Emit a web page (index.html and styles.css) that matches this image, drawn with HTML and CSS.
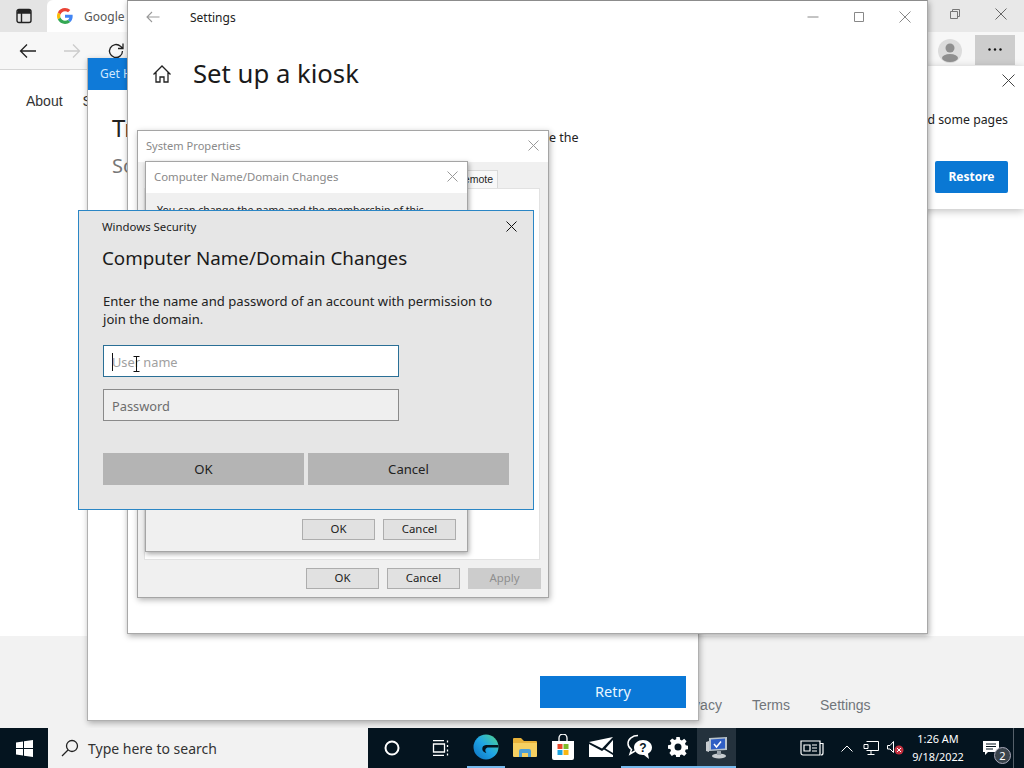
FILE: index.html
```html
<!DOCTYPE html>
<html lang="en">
<head>
<meta charset="utf-8">
<title>Set up a kiosk</title>
<link rel="stylesheet" href="styles.css">
</head>
<body>
<div class="screen">
  <div class="desktop">
    <div class="browser">
      <div class="tabstrip">
        <div class="tab-side"><svg width="16" height="16" viewBox="0 0 16 16" fill="none" stroke="#222" stroke-width="1.4"><rect x="1" y="1.5" width="14" height="13" rx="2"/><path d="M1 5h14M5.5 5v9.5"/><path d="M1.5 2h13v3h-13z" fill="#222" stroke="none"/></svg></div>
        <div class="tab">
          <svg width="16" height="16" viewBox="0 0 48 48"><path fill="#EA4335" d="M24 9.500c3.500 0 6.700 1.300 9.100 3.500l6.800-6.800C35.800 2.400 30.300 0 24 0 14.600 0 6.500 5.400 2.600 13.200l7.900 6.100C12.400 13.700 17.700 9.500 24 9.500z"/><path fill="#4285F4" d="M47 24.500c0-1.600-.1-3.100-.4-4.500H24v9h12.900c-.6 3-2.200 5.500-4.700 7.200l7.600 5.900C44.200 38 47 31.800 47 24.500z"/><path fill="#FBBC05" d="M10.500 28.700C10 27.200 9.800 25.600 9.800 24s.2-3.200.7-4.700l-7.900-6.100C1 16.400 0 20.100 0 24s1 7.600 2.600 10.800l7.900-6.100z"/><path fill="#34A853" d="M24 48c6.500 0 11.900-2.100 15.900-5.800l-7.600-5.900c-2.100 1.400-4.900 2.300-8.300 2.300-6.300 0-11.600-4.200-13.500-9.900l-7.900 6.100C6.500 42.600 14.600 48 24 48z"/></svg>
          <span class="tab-title">Google</span>
        </div>
        <div class="win-controls-back">
          <svg width="12" height="12" viewBox="0 0 12 12" fill="none" stroke="#777"><path d="M1.500 3.500h7v7h-7zM3.500 3.500v-2h7v7h-2"/></svg>
          <svg width="12" height="12" viewBox="0 0 12 12" fill="none" stroke="#666"><path d="M.5.500l11 11M11.500.500l-11 11"/></svg>
        </div>
      </div>
      <div class="toolbar">
        <svg class="tool-back" width="18" height="16" viewBox="0 0 18 16" fill="none" stroke="#222" stroke-width="1.300"><path d="M17 8H1.500M8 1.500L1.500 8 8 14.500"/></svg>
        <svg class="tool-forward" width="18" height="16" viewBox="0 0 18 16" fill="none" stroke="#ccc" stroke-width="1.300"><path d="M1 8h15.500M10 1.500L16.500 8 10 14.500"/></svg>
        <svg class="tool-reload" width="18" height="18" viewBox="0 0 18 18" fill="none" stroke="#222" stroke-width="1.300"><path d="M15.500 9a6.500 6.500 0 1 1-2-4.700L16 6.500M16 1.500v5h-5"/></svg>
        <svg class="avatar" width="24" height="24" viewBox="0 0 24 24"><circle cx="12" cy="12" r="12" fill="#dcdcdc"/><circle cx="12" cy="9" r="4.500" fill="#8f8f8f"/><ellipse cx="12" cy="19" rx="8" ry="4" fill="#8f8f8f"/></svg>
        <div class="more"><svg width="14" height="3" viewBox="0 0 14 3" fill="#111"><circle cx="1.500" cy="1.500" r="1.200"/><circle cx="7" cy="1.500" r="1.200"/><circle cx="12.500" cy="1.500" r="1.200"/></svg></div>
      </div>
      <div class="page">
        <div class="page-nav"><span>About</span><span>Store</span></div>
      </div>
      <div class="page-footer"><span>Privacy</span><span>Terms</span><span>Settings</span></div>
    </div>

    <div class="restore-bar">
      <svg class="restore-close" width="13" height="13" viewBox="0 0 13 13" fill="none" stroke="#444"><path d="M.5.500l12 12M12.500.500l-12 12"/></svg>
      <p class="restore-text">d some pages</p>
      <div class="restore-btn">Restore</div>
    </div>

    <div class="error-dialog">
      <div class="error-head">Get H</div>
      <div class="error-body">
        <div class="error-title">Tr</div>
        <div class="error-sub">So</div>
      </div>
      <div class="error-foot"><div class="retry">Retry</div></div>
    </div>

    <div class="settings">
      <div class="settings-bar">
        <svg class="settings-back" width="14" height="12" viewBox="0 0 14 12" fill="none" stroke="#999" stroke-width="1.100"><path d="M13.500 6H1M6 1L1 6l5 5"/></svg>
        <span class="settings-name">Settings</span>
        <div class="caption-btns">
          <svg width="12" height="12" viewBox="0 0 12 12" stroke="#888" fill="none"><path d="M.5 6h11"/></svg>
          <svg width="12" height="12" viewBox="0 0 12 12" stroke="#888" fill="none"><path d="M1.500 1.500h9v9h-9z"/></svg>
          <svg width="12" height="12" viewBox="0 0 12 12" stroke="#888" fill="none"><path d="M.5.500l11 11M11.500.500l-11 11"/></svg>
        </div>
      </div>
      <div class="settings-head">
        <svg width="20" height="20" viewBox="0 0 20 20" fill="none" stroke="#222" stroke-width="1.300"><path d="M1.500 10.500L10 2l8.500 8.500M4 8.500V18h4v-5h4v5h4V8.500"/></svg>
        <h1 class="settings-title">Set up a kiosk</h1>
      </div>
      <p class="settings-text">e the</p>
    </div>

    <div class="sysprops">
      <div class="cap"><span class="cap-title cap-sys">System Properties</span>
        <svg width="11" height="11" viewBox="0 0 11 11" stroke="#999" fill="none"><path d="M.5.500l10 10M10.500.500l-10 10"/></svg>
      </div>
      <div class="sys-tabs"><span class="sys-tab">emote</span></div>
      <div class="sys-pane"></div>
      <div class="btn-row sys-btns"><span class="btn">OK</span><span class="btn">Cancel</span><span class="btn is-off">Apply</span></div>
    </div>

    <div class="namechange">
      <div class="cap"><span class="cap-title">Computer Name/Domain Changes</span>
        <svg width="11" height="11" viewBox="0 0 11 11" stroke="#999" fill="none"><path d="M.5.500l10 10M10.500.500l-10 10"/></svg>
      </div>
      <p class="name-text">You can change the name and the membership of this</p>
      <div class="btn-row name-btns"><span class="btn">OK</span><span class="btn">Cancel</span></div>
    </div>

    <div class="security">
      <div class="sec-top"><span class="sec-label">Windows Security</span>
        <svg width="11" height="11" viewBox="0 0 11 11" stroke="#111" fill="none"><path d="M.5.500l10 10M10.500.500l-10 10"/></svg>
      </div>
      <h2 class="sec-title">Computer Name/Domain Changes</h2>
      <p class="sec-text">Enter the name and password of an account with permission to join the domain.</p>
      <div class="field field-active"><span class="caret"></span><span class="ph">User name</span>
        <svg class="ibeam" width="7" height="16" viewBox="0 0 7 16" fill="none" stroke="#111"><path d="M.5.500h6M3.500.500v15M.5 15.500h6"/></svg>
      </div>
      <div class="field"><span class="ph ph-dark">Password</span></div>
      <div class="sec-btns"><span class="sec-btn">OK</span><span class="sec-btn">Cancel</span></div>
    </div>
  </div>

  <div class="taskbar">
    <div class="start"><svg width="17" height="17" viewBox="0 0 17 17" fill="#fff"><path d="M0 2.500l7-1v6.500H0zM8 1.300L17 0v8H8zM0 9h7v6.500l-7-1zM8 9h9v8l-9-1.300z"/></svg></div>
    <div class="search">
      <svg width="18" height="18" viewBox="0 0 18 18" fill="none" stroke="#222" stroke-width="1.300"><circle cx="11" cy="7" r="5.500"/><path d="M7 11l-6 6"/></svg>
      <span>Type here to search</span>
    </div>
    <div class="wide-item"><svg width="16" height="16" viewBox="0 0 16 16" fill="none" stroke="#fff" stroke-width="2"><circle cx="8" cy="8" r="6.500"/></svg></div>
    <div class="wide-item"><svg width="17" height="16" viewBox="0 0 17 16" fill="none" stroke="#fff" stroke-width="1.300"><path d="M1 .5h11M1 15.500h11M1.500 4h11v8h-11zM15.500 .5v2M15.500 5v2M15.500 9.500v2M15.500 13.500v2"/></svg></div>
    <div class="app app-on">
      <svg width="26" height="26" viewBox="0 0 26 26"><defs><linearGradient id="eg" x1="0" y1="1" x2="1" y2="0"><stop offset="0" stop-color="#0d6fbe"/><stop offset=".5" stop-color="#1fa5e6"/><stop offset="1" stop-color="#53d68a"/></linearGradient></defs><circle cx="13" cy="13" r="12.500" fill="url(#eg)"/><path d="M13 11c-2.500.2-4 2-3.700 4.200.3 2 2 3.500 4.200 3.800-1-1-1.500-2.500-1-3.800.5-1.200 1.500-1.700 3-1.700h9.900c.2-1.200.1-2-.1-2.500z" fill="#04141f"/></svg>
    </div>
    <div class="app">
      <svg width="24" height="20" viewBox="0 0 24 20"><path d="M0 2a1 1 0 0 1 1-1h7l3 3h12a1 1 0 0 1 1 1v14H0z" fill="#e8b23a"/><path d="M0 6h24v13a1 1 0 0 1-1 1H1a1 1 0 0 1-1-1z" fill="#f6d061"/><path d="M6 20v-6a2 2 0 0 1 2-2h8a2 2 0 0 1 2 2v6h-3v-4H9v4z" fill="#4d9fd6"/></svg>
    </div>
    <div class="app">
      <svg width="24" height="26" viewBox="0 0 24 26"><path d="M8 7V4a4 4 0 0 1 8 0v3" fill="none" stroke="#fff" stroke-width="1.300"/><path d="M1 7h22v17a2 2 0 0 1-2 2H3a2 2 0 0 1-2-2z" fill="#fff"/><rect x="6.500" y="10" width="5" height="5" fill="#e8472a"/><rect x="12.500" y="10" width="5" height="5" fill="#7cba2a"/><rect x="6.500" y="16" width="5" height="5" fill="#1aa3e0"/><rect x="12.500" y="16" width="5" height="5" fill="#f9b612"/></svg>
    </div>
    <div class="app">
      <svg width="24" height="20" viewBox="0 0 24 20" fill="#fff"><path d="M0 5L24 0 13 11.500z"/><path d="M0 7v13h24v-2l-9-5.500-2 1.500z"/><path d="M24 3v13l-7.500-4.500z"/></svg>
    </div>
    <div class="app app-on">
      <svg width="26" height="26" viewBox="0 0 26 26"><path d="M11 1.500c-5.500 0-10 3.500-10 8 0 2.500 1.300 4.500 3.500 6L3 20l5-3" fill="none" stroke="#fff" stroke-width="1.500"/><path d="M16 6c-5 0-9 3.300-9 7.500S11 21 16 21l1 .1 5 3.900-1-5.200c2.300-1.400 4-3.600 4-6.300C25 9.300 21 6 16 6z" fill="#fff"/><text class="help-mark" x="16" y="18">?</text></svg>
    </div>
    <div class="app app-on">
      <svg width="20" height="20" viewBox="0 0 20 20"><path fill="#fff" fill-rule="evenodd" d="M8.300 0h3.400l.5 2.700 1.700.7 2.300-1.600 2.400 2.400-1.600 2.300.7 1.700 2.700.5v3.400l-2.700.5-.7 1.700 1.600 2.300-2.400 2.400-2.300-1.600-1.700.7-.5 2.700H8.300l-.5-2.700-1.700-.7-2.300 1.600L1.400 16l1.600-2.300-.7-1.700L0 11.700V8.300l2.700-.5.7-1.700-1.600-2.300 2.400-2.400 2.300 1.600 1.700-.7zM10 6.500a3.500 3.500 0 1 0 0 7 3.500 3.500 0 0 0 0-7z"/></svg>
    </div>
    <div class="app app-on app-active">
      <svg width="24" height="24" viewBox="0 0 24 24"><path d="M4 3l18-1v13L4 16z" fill="#b9c4cc"/><path d="M6 4.500l14-1v10L6 14.500z" fill="#2f5fc4"/><path d="M9 9l2.500 3L16 6.500" stroke="#fff" stroke-width="1.500" fill="none"/><path d="M1 7l3-1v11l-3-1z" fill="#c7ccd0"/><ellipse cx="14" cy="21" rx="7" ry="2.500" fill="#c7ccd0"/><rect x="12" y="16" width="4" height="4" fill="#9aa3aa"/></svg>
    </div>
    <div class="tray">
      <div class="tray-news"><svg width="24" height="16" viewBox="0 0 24 16" fill="none" stroke="#fff" stroke-width="1.200"><path d="M1 1h19v14H3a2 2 0 0 1-2-2zM20 3.500h3V13a2 2 0 0 1-2 2"/><path d="M4 5h6v6H4zM12 5h5M12 8h5M12 11h5"/></svg></div>
      <div class="tray-icon"><svg width="12" height="7" viewBox="0 0 12 7" fill="none" stroke="#fff"><path d="M.5 6.500L6 1l5.500 5.500"/></svg></div>
      <div class="tray-icon"><svg width="16" height="14" viewBox="0 0 16 14" fill="none" stroke="#fff"><path d="M3.500.5h12v9h-12M1 3.500h4v4H1zM8 9.500v3.500M4.500 13.500h7"/></svg></div>
      <div class="tray-icon"><svg width="17" height="14" viewBox="0 0 17 14"><path d="M.5 4.500h2.500L6.500.5v11L3 8H.5z" fill="none" stroke="#fff"/><circle cx="12" cy="9" r="4.500" fill="#c4303f"/><path d="M10 7l4 4M14 7l-4 4" stroke="#fff"/></svg></div>
      <div class="clock"><span>1:26 AM</span><span>9/18/2022</span></div>
      <div class="notif"><svg width="16" height="15" viewBox="0 0 16 15"><path d="M0 0h16v11H5l-3 3v-3H0z" fill="#fff"/><path d="M3 3h10M3 5.500h10M3 8h7" stroke="#04141f"/></svg><span class="notif-badge">2</span></div>
      <div class="show-desktop"></div>
    </div>
  </div>
</div>
</body>
</html>
```
FILE: styles.css
```css
* { box-sizing: border-box; }
html, body { margin: 0; padding: 0; }
body { font-family: "Noto Sans", "Open Sans", sans-serif; color: #111; overflow: hidden; }
p, h1, h2 { margin: 0; font-weight: 400; }
svg { display: block; flex: none; }

.screen { width: 1024px; height: 768px; display: flex; flex-direction: column; }
.desktop { position: relative; flex: 1; overflow: hidden; background: #fff; }

/* Browser */
.browser { height: 100%; display: flex; flex-direction: column; }
.tabstrip { height: 32px; background: #e8e8e8; display: flex; align-items: stretch; }
.tab-side { width: 47px; padding: 8px 0 0 16px; background: #e4e4e4; }
.tab { width: 260px; background: #fff; border-radius: 6px 6px 0 0; display: flex; align-items: center; gap: 11px; padding-left: 10px; }
.tab-title { font-size: 12px; color: #555; }
.win-controls-back { margin-left: auto; display: flex; gap: 34px; padding: 8px 17px 0 0; }
.toolbar { height: 38px; background: #f7f7f7; border-bottom: 1px solid #d6d6d6; display: flex; align-items: center; padding-left: 19px; }
.tool-back { margin-right: 26px; }
.tool-forward { margin-right: 26px; }
.avatar { margin-left: auto; margin-right: 13px; }
.more { width: 40px; height: 30px; background: #cdcdcd; margin: -2px 9px 0 0; display: flex; align-items: center; justify-content: center; }
.page { flex: 1; background: #fff; }
.page-nav { display: flex; gap: 20px; padding: 23px 0 0 26px; font: 14px/16px "Liberation Sans", sans-serif; color: #333; }
.page-footer { height: 92px; background: #f2f2f2; display: flex; gap: 30px; padding: 61px 0 0 676px; font: 14px/16px "Liberation Sans", sans-serif; color: #70757a; }

.restore-bar { position: absolute; left: 700px; top: 66px; width: 324px; height: 143px; background: #fff; border-radius: 4px 0 0 4px; box-shadow: 0 2px 8px rgba(0,0,0,.25); display: flex; flex-direction: column; align-items: flex-end; padding: 8px 10px 0 0; }
.restore-close { margin-right: -1px; }
.restore-text { font-size: 12.300px; line-height: 18px; margin: 24px 6px 0 0; color: #222; white-space: nowrap; }
.restore-btn { width: 73px; height: 32px; margin: 32px 6px 0 0; background: #0a78d4; border-radius: 2px; color: #fff; font-size: 12px; font-weight: 700; line-height: 31px; text-align: center; }

/* Dialog behind settings */
.error-dialog { position: absolute; left: 87px; top: 58px; width: 612px; height: 663px; background: #fff; border: 1px solid #b0b0b0; border-top: 0; box-shadow: 1px 2px 6px rgba(0,0,0,.3); display: flex; flex-direction: column; }
.error-head { height: 32px; background: #0f7ad8; color: #cfe8ff; font-size: 12px; line-height: 31px; padding-left: 12px; }
.error-body { flex: 1; padding: 22px 0 0 24px; }
.error-title { font-size: 24px; line-height: 32px; color: #222; }
.error-sub { font-size: 20px; line-height: 28px; margin-top: 8px; color: #777; }
.error-foot { display: flex; justify-content: flex-end; padding: 0 12px 12px 0; }
.retry { width: 146px; height: 32px; background: #0a78d7; color: #e8f6ff; font-size: 14.500px; line-height: 31px; text-align: center; }

/* Settings */
.settings { position: absolute; left: 127px; top: 0; width: 801px; height: 634px; background: #fff; border: 1px solid #a8a8a8; border-top-color: #8c8c8c; box-shadow: 1px 2px 6px rgba(0,0,0,.35); }
.settings-bar { height: 32px; display: flex; align-items: center; padding-left: 18px; }
.settings-name { font-size: 12px; margin-left: 30px; color: #222; }
.caption-btns { margin-left: auto; display: flex; gap: 34px; padding-right: 16px; }
.settings-head { display: flex; align-items: center; gap: 21px; padding: 23px 0 0 24px; }
.settings-title { font-size: 25.700px; line-height: 36px; color: #1a1a1a; }
.settings-text { font-size: 12.500px; line-height: 18px; margin: 37px 0 0 421px; color: #222; }

/* Classic dialogs */
.sysprops { position: absolute; left: 137px; top: 130px; width: 412px; height: 468px; background: #f0f0f0; border: 1px solid #a5a5a5; box-shadow: 1px 2px 6px rgba(0,0,0,.3); display: flex; flex-direction: column; }
.cap { height: 31px; background: #fff; display: flex; align-items: center; justify-content: space-between; padding: 0 9px 2px 8px; }
.cap-title { font-size: 11.350px; color: #8a8a8a; }
.cap-sys { font-size: 11.100px; }
.sys-tabs { height: 26px; display: flex; justify-content: flex-end; align-items: flex-end; padding-right: 50px; }
.sys-tab { height: 18px; width: 60px; background: #f8f8f8; border: 1px solid #d9d9d9; border-bottom: 0; font: 10.500px/17px "Liberation Sans", sans-serif; color: #222; text-align: right; padding-right: 4px; }
.sys-pane { width: 396px; height: 372px; margin-left: 6px; background: #fff; border: 1px solid #e2e2e2; }
.btn-row { display: flex; justify-content: flex-end; gap: 8px; }
.sys-btns { padding: 8px 7px 0 0; }
.btn { width: 73px; height: 21px; background: #e1e1e1; border: 1px solid #adadad; font-size: 11.400px; line-height: 18px; text-align: center; color: #222; }
.is-off { background: #ccc; border-color: #ccc; color: #8f8f8f; }

.namechange { position: absolute; left: 145px; top: 161px; width: 323px; height: 391px; background: #f0f0f0; border: 1px solid #a5a5a5; box-shadow: 1px 2px 5px rgba(0,0,0,.35); display: flex; flex-direction: column; }
.name-text { font-size: 10.500px; line-height: 15px; padding: 10px 0 0 11px; white-space: nowrap; flex: 1; color: #222; }
.name-btns { padding: 0 11px 11px 0; }

/* Windows Security */
.security { position: absolute; left: 78px; top: 210px; width: 456px; height: 300px; background: #e6e6e6; border: 1px solid #2b86c5; padding: 0 24px 0 23px; }
.sec-top { height: 31px; display: flex; align-items: center; justify-content: space-between; margin-right: -8px; }
.sec-label { font-size: 11.400px; color: #222; }
.sec-title { font-size: 18.800px; line-height: 28px; margin-top: 2px; color: #1a1a1a; white-space: nowrap; }
.sec-text { width: 400px; font-size: 13.100px; line-height: 18px; margin: 20px 0 0 1px; color: #222; }
.field { position: relative; width: 296px; height: 32px; margin: 17px 0 0 1px; background: #efefef; border: 1px solid #8a8a8a; padding: 1px 0 0 8px; display: flex; align-items: center; }
.field + .field { margin-top: 12px; }
.field-active { background: #fff; border-color: #2a6f96; }
.ph { font-size: 12.800px; color: #a0a0a0; }
.ph-dark { color: #6d6d6d; }
.caret { width: 1px; height: 18px; background: #111; margin-right: -1px; }
.ibeam { position: absolute; left: 29px; top: 10px; }
.sec-btns { display: flex; gap: 4px; margin: 32px 0 0 1px; }
.sec-btn { height: 32px; width: 201px; background: #b4b4b4; font-size: 13.100px; line-height: 33px; text-align: center; color: #222; }

/* Taskbar */
.taskbar { height: 40px; background: #04141f; display: flex; align-items: stretch; }
.start { width: 48px; display: flex; align-items: center; justify-content: center; }
.search { width: 320px; background: #f2f2f2; display: flex; align-items: center; gap: 9px; padding-left: 13px; font-size: 14px; color: #333; }
.wide-item { width: 48px; display: flex; align-items: center; justify-content: center; }
.wide-item + .app { margin-left: 3px; }
.app { width: 38.400px; display: flex; align-items: center; justify-content: center; border-bottom: 2px solid transparent; }
.app-on { border-bottom-color: #76b9ed; }
.app-active { background: #24323d; }
.help-mark { font: 700 12px "Liberation Sans", sans-serif; fill: #04141f; text-anchor: middle; }
.tray { margin-left: auto; display: flex; align-items: stretch; color: #fff; }
.tray-news { width: 38px; display: flex; align-items: center; justify-content: center; margin-right: 4px; }
.tray-icon { width: 24px; display: flex; align-items: center; justify-content: center; }
.clock { width: 62px; display: flex; flex-direction: column; align-items: center; justify-content: center; font-size: 10.900px; line-height: 18px; }
.notif { position: relative; width: 44px; display: flex; align-items: center; justify-content: center; }
.notif-badge { position: absolute; left: 25px; top: 19px; width: 17px; height: 17px; border-radius: 50%; background: #3a444c; border: 1px solid #aab; font-size: 11px; line-height: 15px; text-align: center; }
.show-desktop { width: 11px; margin-left: 0; border-left: 1px solid #55606a; }
```
